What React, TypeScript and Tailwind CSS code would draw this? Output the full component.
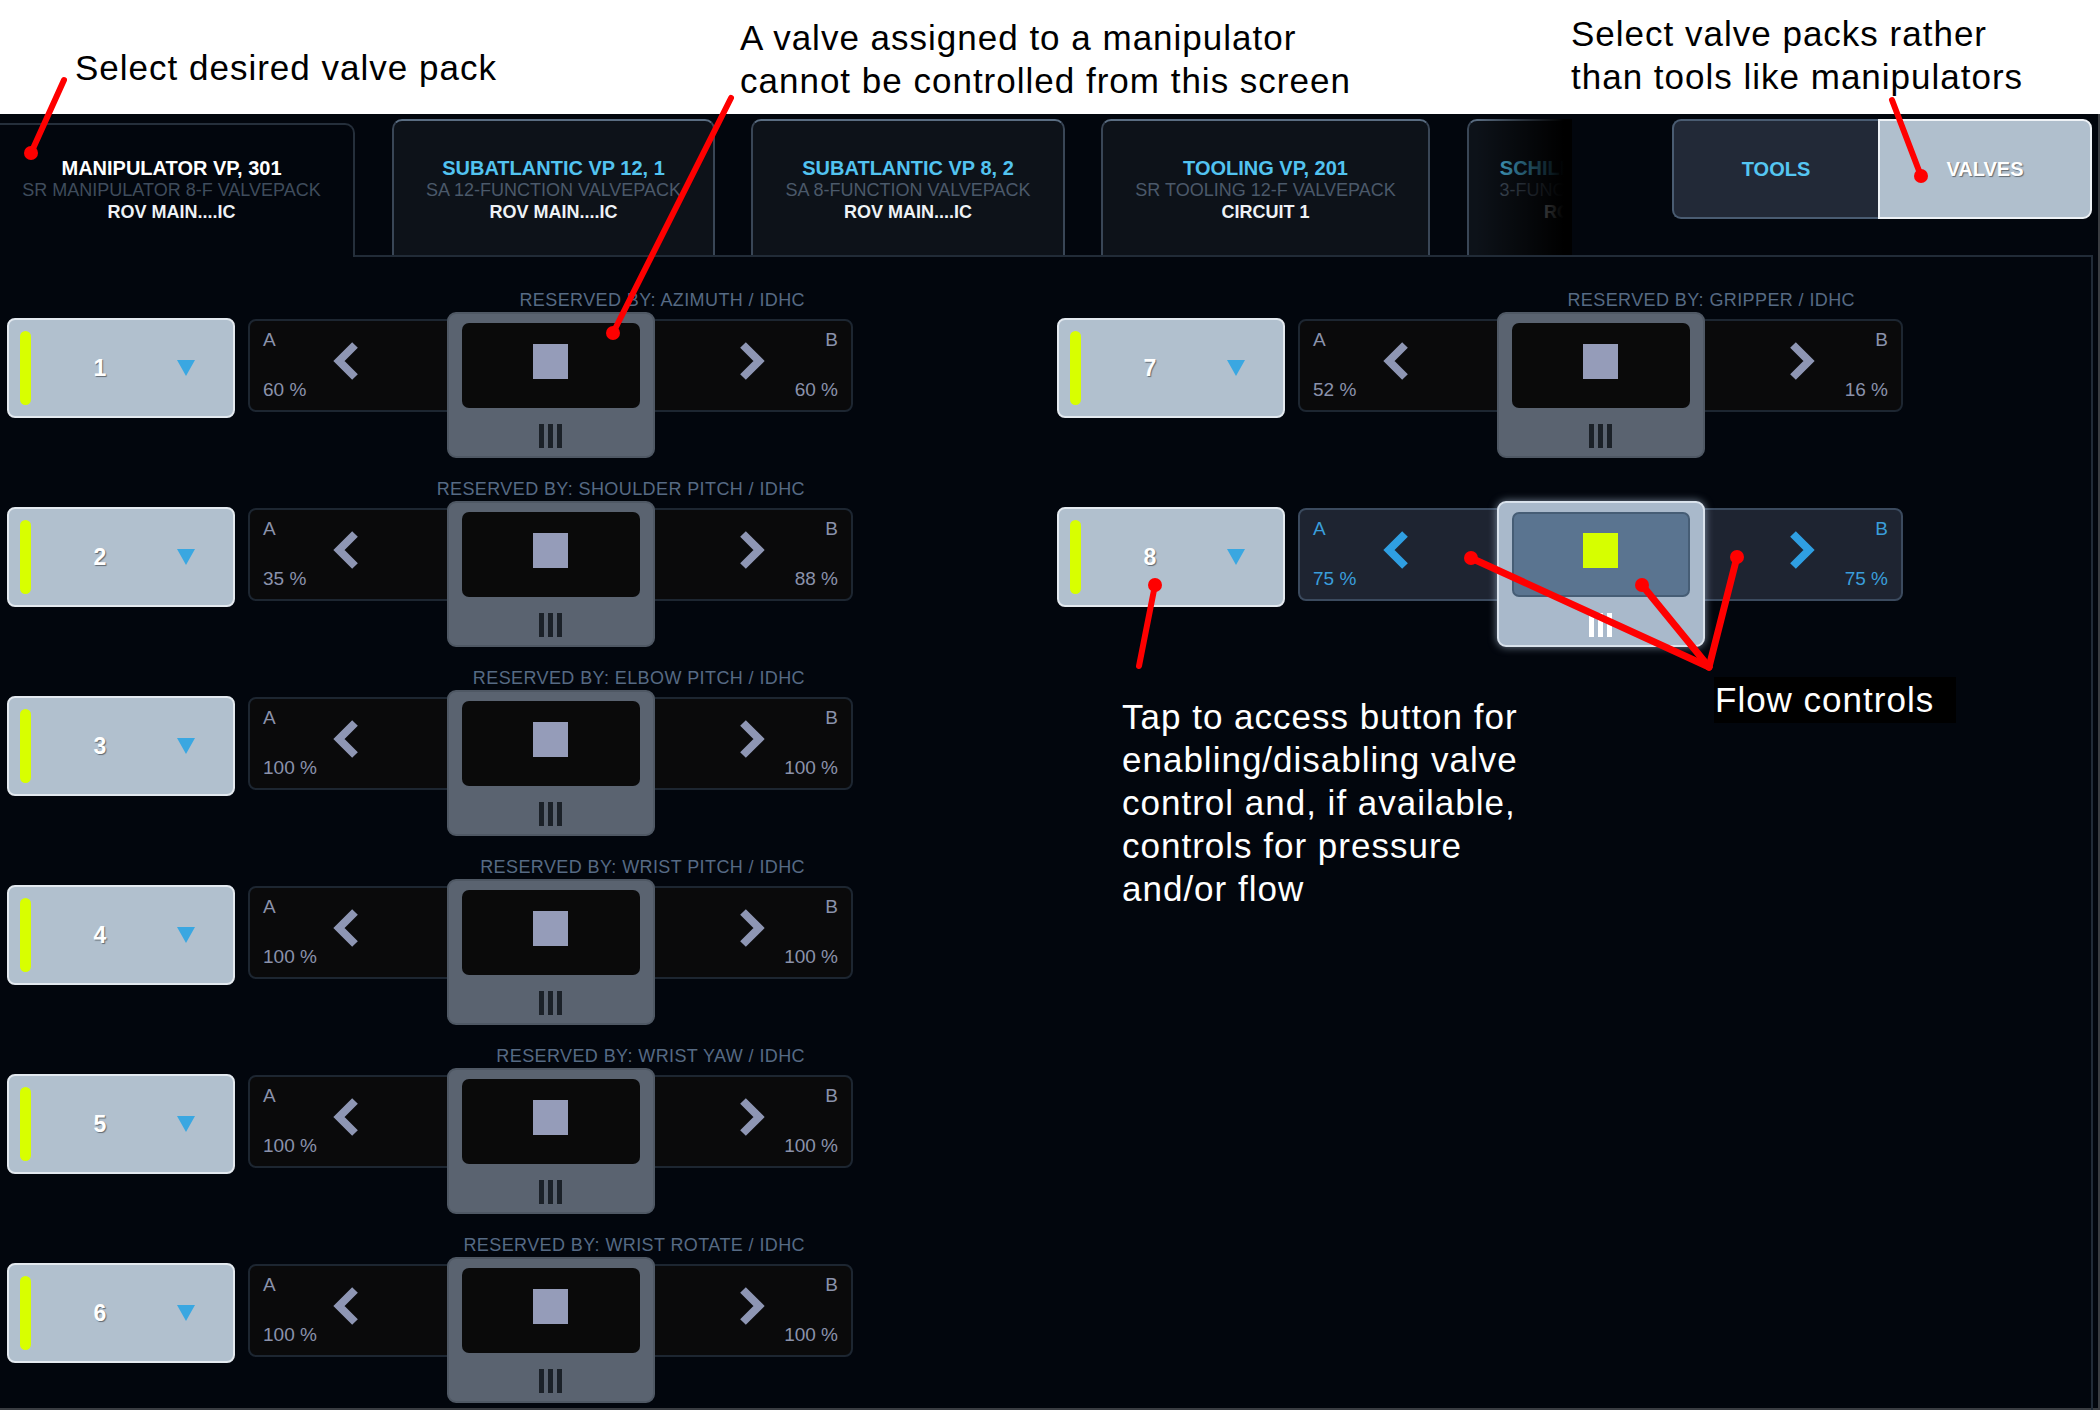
type Valve = { n: number; by?: string; a: string; b: string; active?: boolean }

const leftValves: Valve[] = [
  { n: 1, by: 'AZIMUTH', a: '60 %', b: '60 %' },
  { n: 2, by: 'SHOULDER PITCH', a: '35 %', b: '88 %' },
  { n: 3, by: 'ELBOW PITCH', a: '100 %', b: '100 %' },
  { n: 4, by: 'WRIST PITCH', a: '100 %', b: '100 %' },
  { n: 5, by: 'WRIST YAW', a: '100 %', b: '100 %' },
  { n: 6, by: 'WRIST ROTATE', a: '100 %', b: '100 %' },
]

const rightValves: Valve[] = [
  { n: 7, by: 'GRIPPER', a: '52 %', b: '16 %' },
  { n: 8, a: '75 %', b: '75 %', active: true },
]

const tabs = [
  { title: 'SUBATLANTIC VP 12, 1', sub: 'SA 12-FUNCTION VALVEPACK', line: 'ROV MAIN....IC', w: 'w-[323px] ml-[37px]' },
  { title: 'SUBATLANTIC VP 8, 2', sub: 'SA 8-FUNCTION VALVEPACK', line: 'ROV MAIN....IC', w: 'w-[314px] ml-[36px]' },
  { title: 'TOOLING VP, 201', sub: 'SR TOOLING 12-F VALVEPACK', line: 'CIRCUIT 1', w: 'w-[329px] ml-[36px]' },
]

const Chevron = ({ dir, color }: { dir: 'left' | 'right'; color: string }) => (
  <svg width="30" height="40" viewBox="0 0 30 40" className="mt-[20px] shrink-0">
    <polyline
      points={dir === 'left' ? '25,4 9,20 25,36' : '5,4 21,20 5,36'}
      fill="none"
      stroke={color}
      strokeWidth="8"
      strokeLinejoin="miter"
    />
  </svg>
)

const ValveRow = ({ v }: { v: Valve }) => {
  const txt = v.active ? 'text-[#3a9edb]' : 'text-[#8a92ab]'
  const chev = v.active ? '#2f9fe2' : '#8e96b4'
  return (
    <div className="h-[189px]">
      <div className="h-[24px] w-[805px] whitespace-nowrap text-right text-[18px] leading-[24px] tracking-[0.4px] text-[#566a84]">
        {v.by ? `RESERVED BY: ${v.by} / IDHC` : ''}
      </div>
      <div className="flex items-start">
        <div className="ml-[7px] mt-[6px] flex h-[100px] w-[228px] items-center rounded-[8px] border-2 border-[#e3e9ef] bg-[#b1c0ce] pl-[11px]">
          <div className="h-[74px] w-[11px] rounded-full bg-[#d8ff00]" />
          <div className="w-[138px] text-center text-[23px] font-bold text-white [text-shadow:1px_1px_1px_rgba(0,0,0,0.45)]">
            {v.n}
          </div>
          <svg width="18" height="16" viewBox="0 0 18 16" className="ml-[8px]">
            <polygon points="0,0 18,0 9,16" fill="#3aa7e1" />
          </svg>
        </div>
        <div
          className={`ml-[13px] mt-[7px] flex h-[93px] w-[605px] rounded-[8px] border-2 ${
            v.active ? 'border-[#3b4a5e] bg-[#1e2431]' : 'border-[#1d2631] bg-[#0a0a0b]'
          }`}
        >
          <div className="flex flex-1">
            <div className={`w-[80px] shrink-0 pl-[13px] pt-[8px] text-[19px] leading-[22px] ${txt}`}>
              <div>A</div>
              <div className="mt-[28px] whitespace-nowrap">{v.a}</div>
            </div>
            <Chevron dir="left" color={chev} />
          </div>
          <div
            className={`-mb-[48px] -mt-[9px] h-[146px] w-[208px] shrink-0 rounded-[9px] border-2 px-[13px] pt-[9px] ${
              v.active
                ? 'border-[#d9e2ec] bg-[#a9b9cb] shadow-[0_0_8px_rgba(190,210,235,0.6)]'
                : 'border-[#4f5864] bg-[#5a6370]'
            }`}
          >
            <div
              className={`flex h-[85px] items-center justify-center rounded-[7px] ${
                v.active ? 'border-2 border-[#465d75] bg-[#5a7490]' : 'bg-[#0a0a0a]'
              }`}
            >
              <div className={`-mt-[8px] h-[35px] w-[35px] ${v.active ? 'bg-[#d6ff00]' : 'bg-[#959cb9]'}`} />
            </div>
            <div className="mt-[16px] flex justify-center gap-[4px]">
              {[0, 1, 2].map((i) => (
                <div key={i} className={`h-[24px] w-[5px] ${v.active ? 'bg-white' : 'bg-[#1b2128]'}`} />
              ))}
            </div>
          </div>
          <div className="flex flex-1">
            <div className="ml-[83px]">
              <Chevron dir="right" color={chev} />
            </div>
            <div className={`flex-1 pr-[13px] pt-[8px] text-right text-[19px] leading-[22px] ${txt}`}>
              <div>B</div>
              <div className="mt-[28px] whitespace-nowrap">{v.b}</div>
            </div>
          </div>
        </div>
      </div>
    </div>
  )
}

const TabText = ({ title, sub, line, active }: { title: string; sub: string; line: string; active?: boolean }) => (
  <div className="whitespace-nowrap text-center leading-[22px]">
    <div className={`text-[20px] font-bold ${active ? 'text-white' : 'text-[#52c3f0]'}`}>{title}</div>
    <div className={`text-[18px] ${active ? 'text-[#3f4c5c]' : 'text-[#4b596a]'}`}>{sub}</div>
    <div className="text-[18px] font-bold text-[#eef2f6]">{line}</div>
  </div>
)

export default function App() {
  return (
    <div className="relative h-[1410px] w-[2100px] overflow-hidden bg-white font-['Liberation_Sans',Arial,sans-serif]">
      <header className="flex h-[114px] items-start whitespace-nowrap text-[35px] leading-[43px] tracking-[1px] text-black">
        <div className="ml-[75px] mt-[46px] w-[665px]">Select desired valve pack</div>
        <div className="mt-[16px] w-[831px]">
          <div>A valve assigned to a manipulator</div>
          <div>cannot be controlled from this screen</div>
        </div>
        <div className="mt-[12px]">
          <div>Select valve packs rather</div>
          <div>than tools like manipulators</div>
        </div>
      </header>

      <main className="flex h-[1296px] flex-col border-b-2 border-r-2 border-[#3a3d42] bg-[#02060d]">
        <div className="flex h-[141px] shrink-0 items-end pr-[6px]">
          <div className="relative z-10 -mb-[2px] -ml-[12px] h-[134px] w-[367px] rounded-t-[10px] border-2 border-b-0 border-[#252f3b] bg-[#02060d] pt-[32px]">
            <TabText title="MANIPULATOR VP, 301" sub="SR MANIPULATOR 8-F VALVEPACK" line="ROV MAIN....IC" active />
          </div>
          {tabs.map((t) => (
            <div
              key={t.title}
              className={`h-[136px] ${t.w} rounded-t-[10px] border-2 border-b-0 border-[#394656] border-t-[#5a6d82] bg-[#0d1219] pt-[36px]`}
            >
              <TabText title={t.title} sub={t.sub} line={t.line} />
            </div>
          ))}
          {/* last tab is cut off by the fade at the edge of the strip */}
          <div className="relative ml-[37px] h-[136px] w-[105px] overflow-hidden">
            <div className="h-[136px] w-[282px] rounded-t-[10px] border-2 border-b-0 border-[#394656] border-t-[#5a6d82] bg-[#0d1219] pt-[36px]">
              <TabText title="SCHILLING HD VP, 302" sub="3-FUNCTION VALVEPACK" line="ROV MAIN....IC" />
            </div>
            <div className="absolute inset-0 bg-linear-to-r from-[#02060d]/0 from-[8%] to-[#000000] to-[92%]" />
          </div>
          <div className="mb-[36px] ml-auto mt-[5px] flex h-[100px] w-[420px] self-start text-[20px] font-bold">
            <div className="flex flex-1 items-center justify-center rounded-l-[9px] border-2 border-r-0 border-[#4a5c72] bg-[#222937] text-[#55c6f2]">
              TOOLS
            </div>
            <div className="flex w-[214px] items-center justify-center rounded-r-[9px] border-2 border-[#eef2f6] bg-[#b0bfcd] text-white [text-shadow:1px_1px_1px_rgba(0,0,0,0.45)]">
              VALVES
            </div>
          </div>
        </div>

        <div className="mr-[5px] flex flex-1 border-r-2 border-t-2 border-[#212b37]">
          <div className="w-[1050px] shrink-0 pt-[31px]">
            {leftValves.map((v) => (
              <ValveRow key={v.n} v={v} />
            ))}
          </div>
          <div className="flex-1 pt-[31px]">
            {rightValves.map((v) => (
              <ValveRow key={v.n} v={v} />
            ))}
            <div className="flex items-start whitespace-nowrap text-[35px] tracking-[1px] text-white">
              <div className="ml-[72px] mt-[29px] w-[592px] leading-[43px]">
                <div>Tap to access button for</div>
                <div>enabling/disabling valve</div>
                <div>control and, if available,</div>
                <div>controls for pressure</div>
                <div>and/or flow</div>
              </div>
              <div className="mt-[11px] h-[46px] bg-black pl-[1px] pr-[22px] leading-[46px]">Flow controls</div>
            </div>
          </div>
        </div>
      </main>

      <svg className="pointer-events-none absolute left-0 top-0 z-20" width="2100" height="1410" viewBox="0 0 2100 1410">
        <g stroke="#ff0000" strokeWidth="6" strokeLinecap="round" fill="#ff0000">
          <line x1="64" y1="80" x2="31" y2="153" />
          <circle cx="31" cy="153" r="7" stroke="none" />
          <line x1="731" y1="98" x2="613" y2="333" />
          <circle cx="613" cy="333" r="7" stroke="none" />
          <line x1="1892" y1="100" x2="1921" y2="176" />
          <circle cx="1921" cy="176" r="7" stroke="none" />
          <line x1="1155" y1="585" x2="1139" y2="666" />
          <circle cx="1155" cy="585" r="7" stroke="none" />
          <line x1="1709" y1="667" x2="1471" y2="558" strokeWidth="7" />
          <circle cx="1471" cy="558" r="7" stroke="none" />
          <line x1="1709" y1="667" x2="1642" y2="585" strokeWidth="7" />
          <circle cx="1642" cy="585" r="7" stroke="none" />
          <line x1="1709" y1="667" x2="1737" y2="557" strokeWidth="7" />
          <circle cx="1737" cy="557" r="7" stroke="none" />
        </g>
      </svg>
    </div>
  )
}
